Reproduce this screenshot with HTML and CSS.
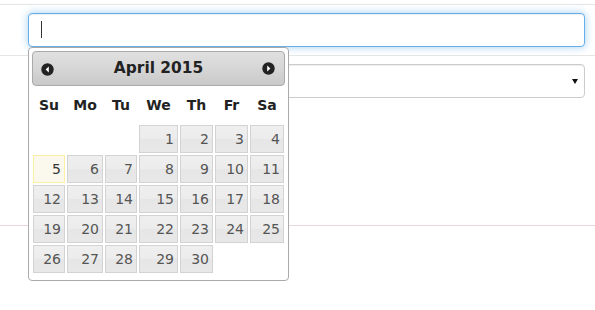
FILE: index.html
```html
<!DOCTYPE html>
<html lang="en">
<head>
  <meta charset="UTF-8">
  <meta name="viewport" content="width=device-width, initial-scale=1.0">
  <title>Datepicker</title>
  <link rel="stylesheet" href="styles.css">
</head>
<body>
  <div class="page">
    <!-- Date field (focused) -->
    <div class="form-group first">
      <div class="form-control focus"><span class="caret"></span></div>
    </div>

    <!-- Select field -->
    <div class="form-group second">
      <div class="form-control select"><span class="arrow"></span></div>
    </div>

    <!-- Datepicker popup -->
    <div class="datepicker">
      <div class="dp-header">
        <a class="dp-prev" title="Prev">
          <svg width="13" height="13" viewBox="0 0 13 13"><circle cx="6.5" cy="6.5" r="6.2" fill="#222"/><path d="M7.8 3.6 L4.6 6.5 L7.8 9.4 Z" fill="#fff"/></svg>
        </a>
        <a class="dp-next" title="Next">
          <svg width="13" height="13" viewBox="0 0 13 13"><circle cx="6.5" cy="6.5" r="6.2" fill="#222"/><path d="M5.2 3.6 L8.4 6.5 L5.2 9.4 Z" fill="#fff"/></svg>
        </a>
        <div class="dp-title">April 2015</div>
      </div>
      <table class="dp-calendar">
        <colgroup>
          <col class="c1"><col class="c2"><col class="c3"><col class="c4"><col class="c5"><col class="c6"><col class="c7">
        </colgroup>
        <thead>
          <tr><th>Su</th><th>Mo</th><th>Tu</th><th>We</th><th>Th</th><th>Fr</th><th>Sa</th></tr>
        </thead>
        <tbody>
          <tr><td></td><td></td><td></td><td><a>1</a></td><td><a>2</a></td><td><a>3</a></td><td><a>4</a></td></tr>
          <tr><td><a class="today">5</a></td><td><a>6</a></td><td><a>7</a></td><td><a>8</a></td><td><a>9</a></td><td><a>10</a></td><td><a>11</a></td></tr>
          <tr><td><a>12</a></td><td><a>13</a></td><td><a>14</a></td><td><a>15</a></td><td><a>16</a></td><td><a>17</a></td><td><a>18</a></td></tr>
          <tr><td><a>19</a></td><td><a>20</a></td><td><a>21</a></td><td><a>22</a></td><td><a>23</a></td><td><a>24</a></td><td><a>25</a></td></tr>
          <tr><td><a>26</a></td><td><a>27</a></td><td><a>28</a></td><td><a>29</a></td><td><a>30</a></td><td></td><td></td></tr>
        </tbody>
      </table>
    </div>
  </div>
</body>
</html>
```

FILE: styles.css
```css
html, body {
  height: 100%;
}
body {
  margin: 0;
  padding: 0;
  background-color: #fff;
  font-family: "Liberation Sans", Arial, sans-serif;
  font-size: 14px;
  color: #333;
}
.page {
  position: relative;
  box-sizing: border-box;
  min-height: 310px;
  padding-top: 4px;
}
.form-group {
  padding: 8px 10px 8px 28px;
  border-top: 1px solid #e5e5e5;
}
.form-group.second {
  height: 34px;
  padding-bottom: 127px;
  border-bottom: 1px solid #e8d6dc;
}
.form-control {
  box-sizing: border-box;
  height: 34px;
  padding: 6px 12px;
  border: 1px solid #ccc;
  border-radius: 4px;
  background-color: #fff;
  box-shadow: inset 0 1px 1px rgba(0, 0, 0, 0.075);
}
.form-control.focus {
  border-color: #66afe9;
  box-shadow: inset 0 1px 1px rgba(0, 0, 0, 0.075), 0 0 8px rgba(102, 175, 233, 0.6);
}
.caret {
  display: block;
  width: 1px;
  height: 17px;
  margin-top: 1px;
  background-color: #333;
}
.select {
  display: flex;
  justify-content: flex-end;
  align-items: center;
  padding-right: 6px;
}
.arrow {
  width: 0;
  height: 0;
  border-left: 3px solid transparent;
  border-right: 3px solid transparent;
  border-top: 5px solid #111;
  margin-top: 1px;
}

/* datepicker */
.datepicker {
  position: absolute;
  top: 47px;
  left: 28px;
  z-index: 10;
  width: 253px;
  padding: 3px 3px 0;
  border: 1px solid #aaa;
  border-radius: 4px;
  background-color: #fff;
  color: #222;
  font-family: "DejaVu Sans", Verdana, sans-serif;
}
.dp-header {
  position: relative;
  height: 33px;
  border: 1px solid #aaa;
  border-radius: 4px;
  background: linear-gradient(to bottom, #e0e0e0 0%, #d6d6d6 50%, #c9c9c9 100%);
}
.dp-title {
  text-align: center;
  line-height: 33px;
  font-size: 15.4px;
  font-weight: bold;
  color: #222;
}
.dp-prev, .dp-next {
  position: absolute;
  top: 11px;
  width: 13px;
  height: 13px;
  line-height: 0;
}
.dp-prev {
  left: 8px;
}
.dp-next {
  right: 9px;
  top: 10px;
}
.dp-calendar {
  width: 253px;
  table-layout: fixed;
  border-collapse: collapse;
  margin: 0 0 6px;
  font-size: 14px;
}
.c1 { width: 34px; }
.c2 { width: 38px; }
.c3 { width: 34px; }
.c4 { width: 41px; }
.c5 { width: 35px; }
.c6 { width: 35px; }
.c7 { width: 36px; }
.dp-calendar th {
  height: 38px;
  padding: 0;
  text-align: center;
  font-weight: bold;
  color: #222;
}
.dp-calendar td {
  padding: 1px;
  height: 28px;
}
.dp-calendar td a {
  display: block;
  box-sizing: border-box;
  height: 28px;
  line-height: 26px;
  padding-right: 3px;
  text-align: right;
  color: #555;
  border: 1px solid #d3d3d3;
  background: linear-gradient(to bottom, #efefef 0%, #ececec 48%, #e6e6e6 52%, #e8e8e8 100%);
}
.dp-calendar td a.today {
  border-color: #fcefa1;
  background: #fbf9ee;
  color: #363636;
}
```
